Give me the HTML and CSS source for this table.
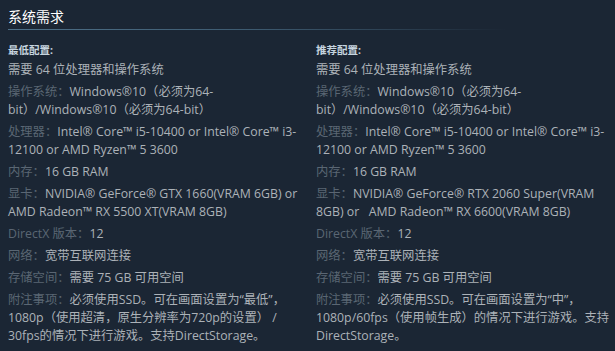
FILE: index.html
```html
<!DOCTYPE html>
<html lang="zh-CN">
<head>
<meta charset="utf-8">
<title>系统需求</title>
<link rel="stylesheet" href="styles.css">
</head>
<body>
<div class="sysreq">
  <h2 class="sysreq-title">系统需求</h2>
  <div class="sysreq-cols">
    <div class="sysreq-col">
      <div class="sysreq-head">最低配置:</div>
      <ul class="sysreq-list">
        <li>需要 64 位处理器和操作系统</li>
        <li><span class="lbl">操作系统：</span>Windows®10（必须为64-bit）/Windows®10（必须为64-bit）</li>
        <li><span class="lbl">处理器：</span>Intel® Core™ i5-10400 or Intel® Core™ i3-12100 or AMD Ryzen™ 5 3600</li>
        <li><span class="lbl">内存：</span>16 GB RAM</li>
        <li><span class="lbl">显卡：</span>NVIDIA® GeForce® GTX 1660(VRAM 6GB) or AMD Radeon™ RX 5500 XT(VRAM 8GB)</li>
        <li><span class="lbl">DirectX 版本：</span>12</li>
        <li><span class="lbl">网络：</span>宽带互联网连接</li>
        <li><span class="lbl">存储空间：</span>需要 75 GB 可用空间</li>
        <li><span class="lbl">附注事项：</span>必须使用SSD。可在画面设置为“最低”，1080p（使用超清，原生分辨率为720p的设置） / 30fps的情况下进行游戏。支持DirectStorage。</li>
      </ul>
    </div>
    <div class="sysreq-col">
      <div class="sysreq-head">推荐配置:</div>
      <ul class="sysreq-list">
        <li>需要 64 位处理器和操作系统</li>
        <li><span class="lbl">操作系统：</span>Windows®10（必须为64-bit）/Windows®10（必须为64-bit）</li>
        <li><span class="lbl">处理器：</span>Intel® Core™ i5-10400 or Intel® Core™ i3-12100 or AMD Ryzen™ 5 3600</li>
        <li><span class="lbl">内存：</span>16 GB RAM</li>
        <li><span class="lbl">显卡：</span>NVIDIA® GeForce® RTX 2060 Super(VRAM 8GB) or&nbsp;&nbsp; AMD Radeon™ RX 6600(VRAM 8GB)</li>
        <li><span class="lbl">DirectX 版本：</span>12</li>
        <li><span class="lbl">网络：</span>宽带互联网连接</li>
        <li><span class="lbl">存储空间：</span>需要 75 GB 可用空间</li>
        <li><span class="lbl">附注事项：</span>必须使用SSD。可在画面设置为“中”，1080p/60fps（使用帧生成）的情况下进行游戏。支持DirectStorage。</li>
      </ul>
    </div>
  </div>
</div>
</body>
</html>
```

FILE: styles.css
```css
html, body {
  margin: 0;
  padding: 0;
  background: #1b2634;
}
body {
  font-family: "Open Sans", "Noto Sans CJK SC", sans-serif;
  font-size: 12.3px;
  color: #acb2b8;
}
.sysreq {
  padding: 8px 0 0 8px;
}
.sysreq-title {
  margin: 0;
  font-size: 14px;
  font-weight: normal;
  line-height: 18px;
  color: #ffffff;
  padding-bottom: 3px;
  border-bottom: 1px solid transparent;
  border-image: linear-gradient(to right, #4e7088 0%, #3d5a70 40%, rgba(61, 90, 112, 0.45) 65%, rgba(61, 90, 112, 0) 82%) 1;
}
.sysreq-cols {
  display: grid;
  grid-template-columns: 300px 1fr;
  column-gap: 8px;
  margin-top: 11px;
}
.sysreq-head {
  font-size: 10.5px;
  font-weight: bold;
  line-height: 18px;
  color: #c6d4df;
  margin-bottom: 2px;
}
.sysreq-list {
  list-style: none;
  margin: 0;
  padding: 0;
}
.sysreq-list li {
  line-height: 18px;
  margin-bottom: 4px;
}
.lbl {
  color: #5a6673;
}
```
